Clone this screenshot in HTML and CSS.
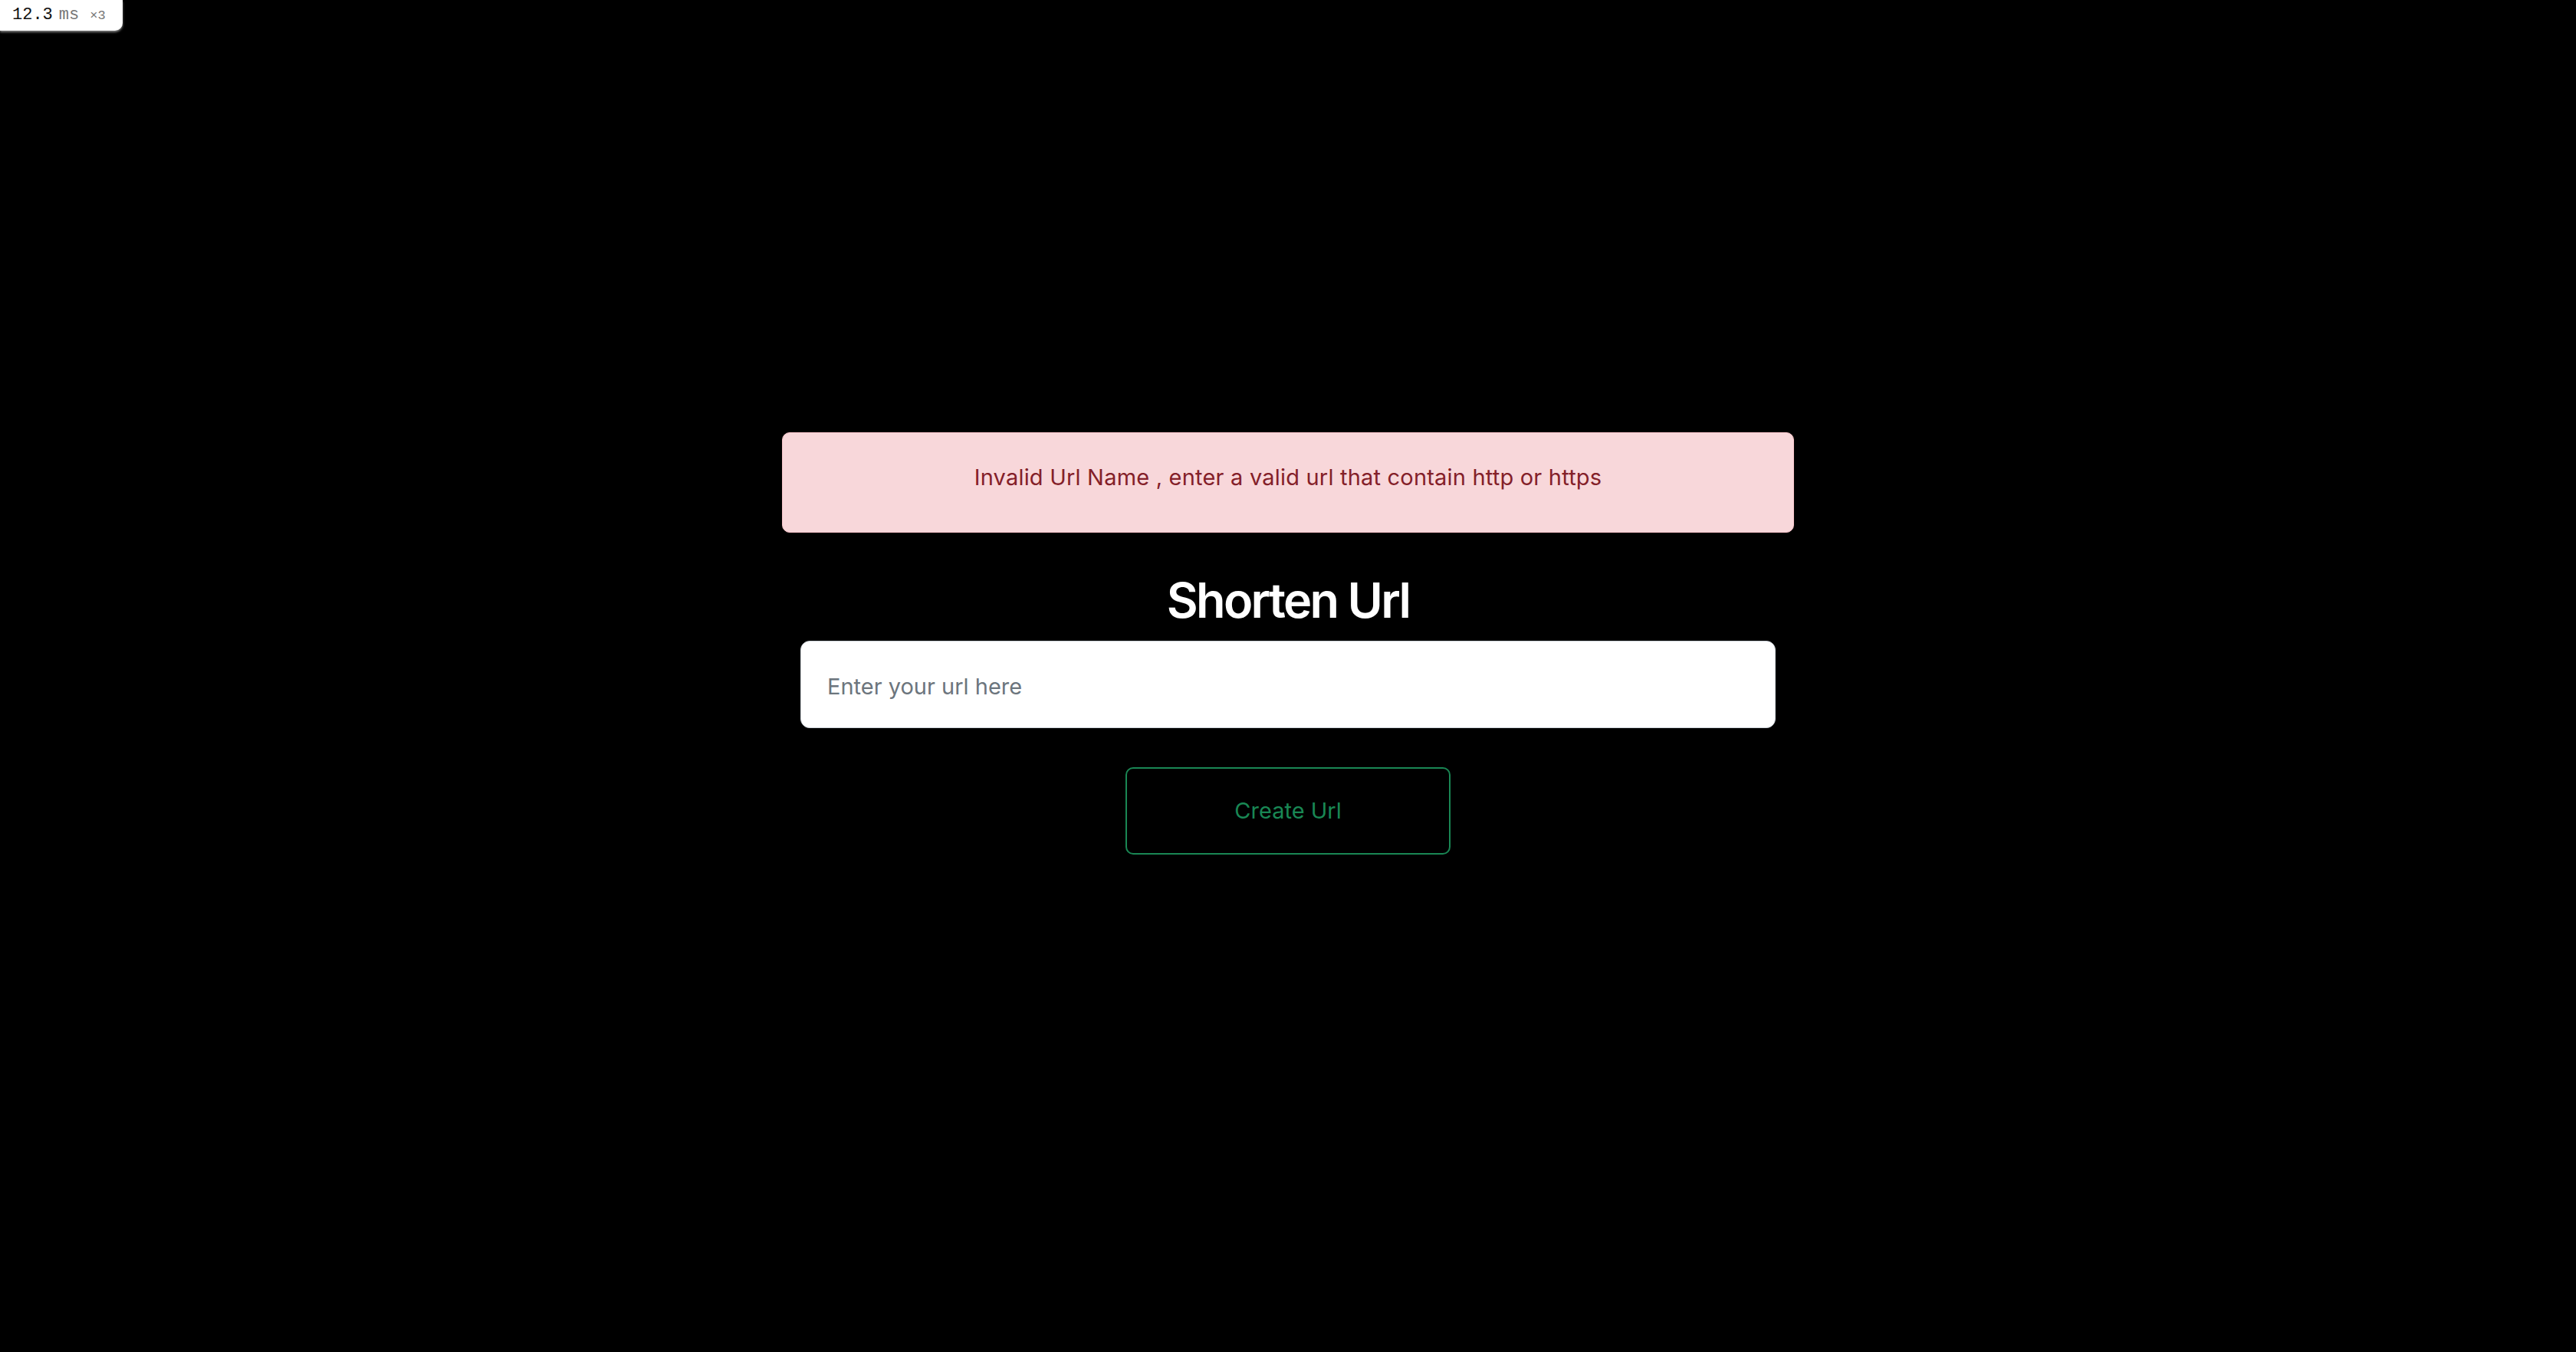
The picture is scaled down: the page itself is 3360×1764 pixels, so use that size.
FILE: index.html
```html
<!DOCTYPE html>
<html lang="en">
<head>
<meta charset="utf-8">
<title>Shorten Url</title>
<link rel="stylesheet" href="styles.css">
</head>
<body>
<div class="perf-badge"><span class="perf-num">12.3</span><span class="perf-unit">ms</span><span class="perf-count">×3</span></div>
<main class="page">
  <div class="container">
    <div class="alert">Invalid Url Name , enter a valid url that contain http or https</div>
    <h1 class="title">Shorten Url</h1>
    <form class="form">
      <input class="url-input" type="text" placeholder="Enter your url here">
      <button class="btn-create" type="button">Create Url</button>
    </form>
  </div>
</main>
</body>
</html>
```
FILE: styles.css
```css
html, body {
  margin: 0;
  padding: 0;
  background: #000;
}
body {
  font-family: "Inter", "Liberation Sans", sans-serif;
  font-size: 29px;
  min-height: 1764px;
}
.perf-badge {
  position: absolute;
  top: 0;
  left: 0;
  width: 160px;
  height: 40px;
  box-sizing: border-box;
  padding-left: 16px;
  background: #fff;
  border-bottom-right-radius: 10px;
  box-shadow: 0 2px 3px rgba(160,160,160,0.8);
  display: flex;
  align-items: baseline;
  font-family: "Liberation Mono", monospace;
  line-height: 40px;
}
.perf-num {
  font-size: 22px;
  color: #111;
}
.perf-unit {
  font-size: 22px;
  color: #777;
  margin-left: 8px;
}
.perf-count {
  font-size: 17px;
  color: #777;
  margin-left: 14px;
}
.container {
  width: 1320px;
  margin: 0 auto;
  padding-top: 564px;
}
.alert {
  box-sizing: border-box;
  height: 131px;
  padding: 36px 28px 0;
  border: 1px solid #f5c2c7;
  border-radius: 10px;
  background: #f8d7da;
  color: #842029;
  font-size: 29px;
  line-height: 43px;
  letter-spacing: 0.2px;
  text-align: center;
}
.title {
  margin: 51px 0 14px;
  color: #fff;
  font-size: 63px;
  font-weight: 600;
  line-height: 75.6px;
  letter-spacing: -0.043em;
  text-align: center;
}
.form {
  padding: 0 24px;
  display: flex;
  flex-direction: column;
  align-items: center;
}
.url-input {
  display: block;
  width: 100%;
  height: 114px;
  box-sizing: border-box;
  padding: 5px 34px 0;
  border: 1px solid #ced4da;
  border-radius: 12px;
  background: #fff;
  font-family: "Inter", "Liberation Sans", sans-serif;
  font-size: 29px;
  color: #212529;
  outline: none;
}
.url-input::placeholder {
  color: #6c757d;
}
.btn-create {
  margin-top: 51px;
  width: 424px;
  height: 114px;
  box-sizing: border-box;
  border: 2px solid #198754;
  border-radius: 10px;
  background: transparent;
  color: #198754;
  font-family: "Inter", "Liberation Sans", sans-serif;
  font-size: 29px;
  cursor: pointer;
}
```
